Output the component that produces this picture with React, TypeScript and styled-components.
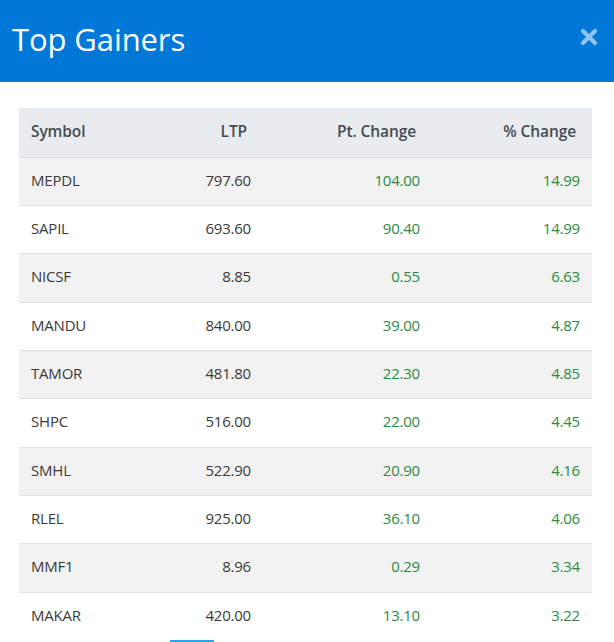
import React from "react";
import styled, { createGlobalStyle } from "styled-components";

const gainers = [
  { symbol: "MEPDL", ltp: "797.60", pt: "104.00", pct: "14.99" },
  { symbol: "SAPIL", ltp: "693.60", pt: "90.40", pct: "14.99" },
  { symbol: "NICSF", ltp: "8.85", pt: "0.55", pct: "6.63" },
  { symbol: "MANDU", ltp: "840.00", pt: "39.00", pct: "4.87" },
  { symbol: "TAMOR", ltp: "481.80", pt: "22.30", pct: "4.85" },
  { symbol: "SHPC", ltp: "516.00", pt: "22.00", pct: "4.45" },
  { symbol: "SMHL", ltp: "522.90", pt: "20.90", pct: "4.16" },
  { symbol: "RLEL", ltp: "925.00", pt: "36.10", pct: "4.06" },
  { symbol: "MMF1", ltp: "8.96", pt: "0.29", pct: "3.34" },
  { symbol: "MAKAR", ltp: "420.00", pt: "13.10", pct: "3.22" },
];

function App() {
  return (
    <>
      <GlobalStyle />
      <Modal>
        <Header>
          <Title>Top Gainers</Title>
          <CloseButton aria-label="close">
            <svg width="18" height="18" viewBox="0 0 18 18">
              <path
                d="M3 3 L15 15 M15 3 L3 15"
                stroke="#8fc4ef"
                strokeWidth="4.2"
                strokeLinecap="round"
              />
            </svg>
          </CloseButton>
        </Header>
        <Body>
          <Table>
            <HeadRow>
              <HeadCell>Symbol</HeadCell>
              <HeadCell $right>LTP</HeadCell>
              <HeadCell $right>Pt. Change</HeadCell>
              <HeadCell $right>% Change</HeadCell>
            </HeadRow>
            {gainers.map((g, i) => (
              <Row key={g.symbol} $striped={i % 2 === 0}>
                <Cell>{g.symbol}</Cell>
                <Cell $right>{g.ltp}</Cell>
                <Cell $right $green>
                  {g.pt}
                </Cell>
                <Cell $right $green>
                  {g.pct}
                </Cell>
              </Row>
            ))}
          </Table>
          <ScrollThumb />
        </Body>
      </Modal>
    </>
  );
}

export default App;

const GlobalStyle = createGlobalStyle`
  body {
    margin: 0;
    background: #ffffff;
    font-family: "Open Sans", "Noto Sans", sans-serif;
    overflow: hidden;
  }
`;

const Modal = styled.div`
  width: 614px;
  height: 642px;
  display: flex;
  flex-direction: column;
  background: #ffffff;
  overflow: hidden;
`;

const Header = styled.div`
  height: 82px;
  flex-shrink: 0;
  background: #0078d7;
  display: flex;
  align-items: center;
  justify-content: space-between;
  padding: 0 16px 0 12px;
  box-sizing: border-box;
`;

const Title = styled.div`
  color: #ffffff;
  font-size: 31px;
  font-weight: 400;
  letter-spacing: -0.1px;
  margin-top: -4px;
`;

const CloseButton = styled.div`
  display: flex;
  align-items: center;
  justify-content: center;
  margin-top: -8px;
  cursor: pointer;
`;

const Body = styled.div`
  padding: 26px 22px 0 19px;
  display: flex;
  flex-direction: column;
`;

const Table = styled.div`
  display: flex;
  flex-direction: column;
  width: 573px;
`;

const HeadRow = styled.div`
  display: grid;
  grid-template-columns: 130px 114px 169px 1fr;
  height: 48.5px;
  padding-bottom: 2px;
  box-sizing: border-box;
  background: #e9ecef;
  align-items: center;
`;

const Row = styled.div<{ $striped: boolean }>`
  display: grid;
  grid-template-columns: 130px 114px 169px 1fr;
  height: 48.35px;
  box-sizing: border-box;
  border-top: 1px solid #dee2e6;
  padding-bottom: 3px;
  background: ${(p) => (p.$striped ? "#f2f2f2" : "#ffffff")};
  align-items: center;
`;

const HeadCell = styled.div<{ $right?: boolean }>`
  font-size: 15.5px;
  font-weight: 600;
  color: #444b52;
  letter-spacing: -0.1px;
  text-align: ${(p) => (p.$right ? "right" : "left")};
  padding: ${(p) => (p.$right ? "0 16px 0 0" : "0 0 0 12px")};
`;

const Cell = styled.div<{ $right?: boolean; $green?: boolean }>`
  font-size: 15px;
  color: ${(p) => (p.$green ? "#2d8a43" : "#3a3a3a")};
  letter-spacing: -0.2px;
  text-align: ${(p) => (p.$right ? "right" : "left")};
  padding: ${(p) => (p.$right ? "0 12px 0 0" : "0 0 0 12px")};
`;

const ScrollThumb = styled.div`
  width: 44px;
  height: 2px;
  margin-left: 151px;
  background: #2fa3e6;
`;
